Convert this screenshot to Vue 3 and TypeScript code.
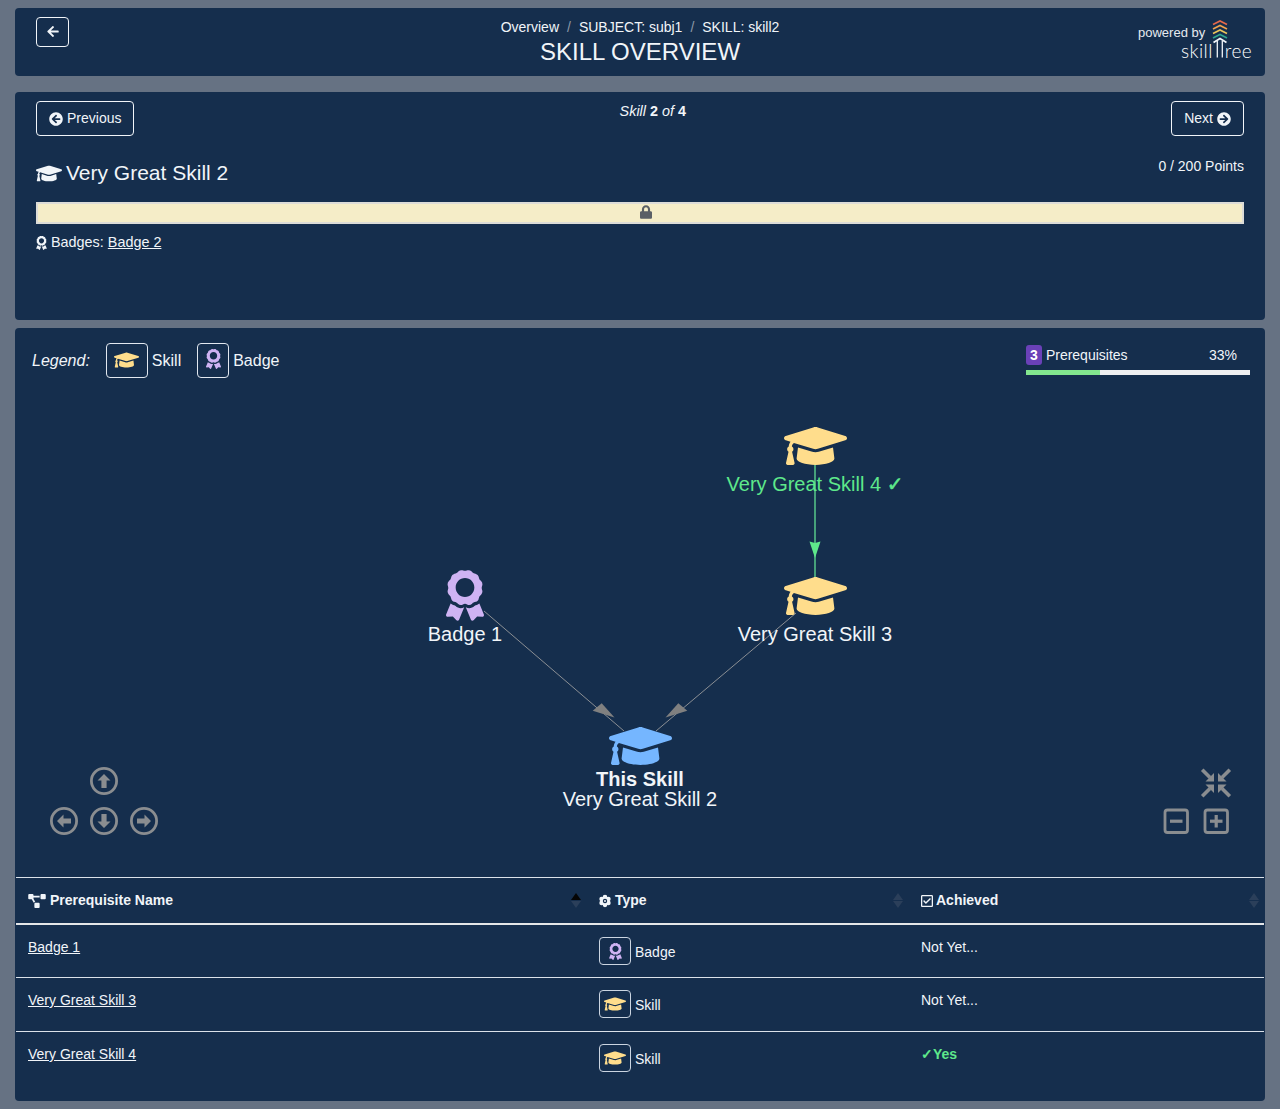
<script setup lang="ts">
const cap = 'M622.34 153.2L343.4 67.5c-15.2-4.67-31.6-4.67-46.79 0L17.66 153.2c-23.54 7.23-23.54 38.36 0 45.59l48.63 14.94c-10.67 13.19-17.23 29.28-17.88 46.9C38.78 266.15 32 276.11 32 288c0 10.78 5.68 19.85 13.86 25.65L20.33 428.53C18.11 438.52 25.71 448 35.94 448h56.11c10.24 0 17.84-9.48 15.62-19.47L82.14 313.65C90.32 307.85 96 298.78 96 288c0-11.57-6.47-21.25-15.66-26.87.76-15.02 8.44-28.3 20.69-36.72L296.6 284.5c9.06 2.78 26.44 6.25 46.79 0l278.95-85.7c23.55-7.24 23.55-38.36 0-45.6zM352.79 315.09c-28.53 8.76-52.84 3.92-65.59 0l-145.02-44.55L128 384c0 35.35 85.96 64 192 64s192-28.65 192-64l-14.18-113.47-145.03 44.56z'
const award = 'M97.12 362.63c-8.69-8.69-4.16-6.24-25.12-11.85-9.51-2.55-17.87-7.45-25.43-13.32L1.2 448.7c-4.39 10.77 3.81 22.47 15.43 22.03l52.69-2.01L105.56 507c8 8.44 22.04 5.81 26.43-4.96l52.05-127.62c-10.84 6.04-22.87 9.58-35.31 9.58-19.5 0-37.82-7.59-51.61-21.37zM382.8 448.7l-45.37-111.24c-7.56 5.88-15.92 10.77-25.43 13.32-21.07 5.64-16.45 3.18-25.12 11.85-13.79 13.78-32.12 21.37-51.62 21.37-12.44 0-24.47-3.55-35.31-9.58L252 502.04c4.39 10.77 18.44 13.4 26.43 4.96l36.25-38.28 52.69 2.01c11.62.44 19.82-11.27 15.43-22.03zM263 340c15.28-15.55 17.03-14.21 38.79-20.14 13.89-3.79 24.75-14.84 28.47-28.98 7.48-28.4 5.54-24.97 25.95-45.75 10.17-10.35 14.14-25.44 10.42-39.58-7.47-28.38-7.48-24.42 0-52.83 3.72-14.14-.25-29.23-10.42-39.58-20.41-20.78-18.47-17.36-25.95-45.75-3.72-14.14-14.58-25.19-28.47-28.98-27.88-7.61-24.52-5.62-44.95-26.41-10.17-10.35-25-14.4-38.89-10.61-27.87 7.6-23.98 7.61-51.9 0-13.89-3.79-28.72.25-38.89 10.61-20.41 20.78-17.05 18.8-44.94 26.41-13.89 3.79-24.75 14.84-28.47 28.98-7.47 28.39-5.54 24.97-25.95 45.75-10.17 10.35-14.15 25.44-10.42 39.58 7.47 28.36 7.48 24.4 0 52.82-3.72 14.14.25 29.23 10.42 39.59 20.41 20.78 18.47 17.35 25.95 45.75 3.72 14.14 14.58 25.19 28.47 28.98C104.6 325.96 106.27 325 121 340c13.23 13.47 33.84 15.88 49.74 5.82a39.676 39.676 0 0 1 42.53 0c15.89 10.06 36.5 7.65 49.73-5.82zM97.66 175.96c0-53.03 42.24-96.02 94.34-96.02s94.34 42.99 94.34 96.02-42.24 96.02-94.34 96.02-94.34-42.99-94.34-96.02z'
const arrowLeft = 'M257.5 445.1l-22.2 22.2c-9.4 9.4-24.6 9.4-33.9 0L7 273c-9.4-9.4-9.4-24.6 0-33.9L201.4 44.7c9.4-9.4 24.6-9.4 33.9 0l22.2 22.2c9.5 9.5 9.3 25-.4 34.3L136.6 216H424c13.3 0 24 10.7 24 24v32c0 13.3-10.7 24-24 24H136.6l120.5 114.8c9.8 9.3 10 24.8.4 34.3z'
const circleLeft = 'M256 504C119 504 8 393 8 256S119 8 256 8s248 111 248 248-111 248-248 248zm28.9-143.6L209.4 288H392c13.3 0 24-10.7 24-24v-16c0-13.3-10.7-24-24-24H209.4l75.5-72.4c9.7-9.3 9.9-24.8.4-34.3l-11-10.9c-9.4-9.4-24.6-9.4-33.9 0L107.7 239c-9.4 9.4-9.4 24.6 0 33.9l132.7 132.7c9.4 9.4 24.6 9.4 33.9 0l11-10.9c9.5-9.5 9.3-25-.4-34.3z'
const circleRight = 'M256 8c137 0 248 111 248 248S393 504 256 504 8 393 8 256 119 8 256 8zm-28.9 143.6l75.5 72.4H120c-13.3 0-24 10.7-24 24v16c0 13.3 10.7 24 24 24h182.6l-75.5 72.4c-9.7 9.3-9.9 24.8-.4 34.3l11 10.9c9.4 9.4 24.6 9.4 33.9 0L404.3 273c9.4-9.4 9.4-24.6 0-33.9L271.6 106.3c-9.4-9.4-24.6-9.4-33.9 0l-11 10.9c-9.5 9.6-9.3 25.1.4 34.4z'
const lock = 'M400 224h-24v-72C376 68.2 307.8 0 224 0S72 68.2 72 152v72H48c-26.5 0-48 21.5-48 48v192c0 26.5 21.5 48 48 48h352c26.5 0 48-21.5 48-48V272c0-26.5-21.5-48-48-48zm-104 0H152v-72c0-39.7 32.3-72 72-72s72 32.3 72 72v72z'
const diagram = 'M384 320H256c-17.67 0-32 14.33-32 32v128c0 17.67 14.33 32 32 32h128c17.67 0 32-14.33 32-32V352c0-17.67-14.33-32-32-32zM192 32c0-17.67-14.33-32-32-32H32C14.33 0 0 14.33 0 32v128c0 17.67 14.33 32 32 32h95.72l73.16 128.04C211.98 300.98 232.4 288 256 288h.28L192 175.51V128h224V64H192V32zM608 0H480c-17.67 0-32 14.33-32 32v128c0 17.67 14.33 32 32 32h128c17.67 0 32-14.33 32-32V32c0-17.67-14.33-32-32-32z'
const checkSquare = 'M400 32H48C21.5 32 0 53.5 0 80v352c0 26.5 21.5 48 48 48h352c26.5 0 48-21.5 48-48V80c0-26.5-21.5-48-48-48zm0 400H48V80h352v352zm-35.864-241.724L191.547 361.48c-4.705 4.667-12.303 4.637-16.97-.068l-90.781-91.516c-4.667-4.705-4.637-12.303.069-16.971l22.719-22.536c4.705-4.667 12.303-4.637 16.97.069l59.792 60.277 141.352-140.216c4.705-4.667 12.303-4.637 16.97.068l22.536 22.718c4.667 4.706 4.637 12.304-.068 16.971z'

interface Row { name: string; kind: 'Badge' | 'Skill'; done: boolean }
const rows: Row[] = [
  { name: 'Badge 1', kind: 'Badge', done: false },
  { name: 'Very Great Skill 3', kind: 'Skill', done: false },
  { name: 'Very Great Skill 4', kind: 'Skill', done: true },
]
const chevrons = [
  { y: 3, c: '#e4694a' },
  { y: 7.5, c: '#f0a24e' },
  { y: 12, c: '#e8c35a' },
  { y: 16.5, c: '#2fa58f' },
]
const nav = [
  { x: 104, y: 781, r: 90 },
  { x: 64, y: 821, r: 0 },
  { x: 104, y: 821, r: 270 },
  { x: 144, y: 821, r: 180 },
]
const fit = [
  { sx: 1, sy: 1 },
  { sx: -1, sy: 1 },
  { sx: 1, sy: -1 },
  { sx: -1, sy: -1 },
]
const lobes = [0, 60, 120, 180, 240, 300].map((a) => ({
  x: 8 + 4.4 * Math.cos((a - 90) * Math.PI / 180),
  y: 8 + 4.4 * Math.sin((a - 90) * Math.PI / 180),
}))
</script>

<template>
  <div class="page">
    <header class="card head">
      <button class="btn back">
        <svg class="i13" viewBox="0 0 448 512"><path :d="arrowLeft" /></svg>
      </button>
      <div class="head-mid">
        <nav class="crumbs">
          <span>Overview</span><i>/</i><span>SUBJECT: subj1</span><i>/</i><span>SKILL: skill2</span>
        </nav>
        <h1>SKILL OVERVIEW</h1>
      </div>
      <div class="brand">
        <span class="pow">powered by</span>
        <svg class="chev" width="18" height="42" viewBox="0 0 18 42">
          <polyline v-for="ch in chevrons" :key="ch.y" :points="`2,${ch.y + 3.6} 9,${ch.y} 16,${ch.y + 3.6}`" :stroke="ch.c" />
          <polyline points="2.5,24.5 9,20.5 15.5,24.5" stroke="#f1f5f9" />
          <line x1="6.3" y1="23" x2="6.3" y2="39.5" stroke="#f1f5f9" />
          <line x1="11.3" y1="23" x2="11.3" y2="39.5" stroke="#f1f5f9" />
        </svg>
        <div class="logo"><span>skill</span><span class="ree">ree</span></div>
      </div>
    </header>

    <section class="card skill">
      <div class="skill-nav">
        <button class="btn step">
          <svg class="i14" viewBox="0 0 512 512"><path :d="circleLeft" /></svg>
          Previous
        </button>
        <div class="count"><em>Skill</em> <b>2</b> <em>of</em> <b>4</b></div>
        <button class="btn step">
          Next
          <svg class="i14" viewBox="0 0 512 512"><path :d="circleRight" /></svg>
        </button>
      </div>
      <div class="title-row">
        <h2>
          <svg class="titlecap" viewBox="0 0 640 512"><path :d="cap" /></svg>
          Very Great Skill 2
        </h2>
        <div class="points">0 / 200 Points</div>
      </div>
      <div class="bar">
        <svg class="lock" viewBox="0 0 448 512"><path :d="lock" /></svg>
      </div>
      <div class="badges">
        <svg class="i14award" viewBox="0 0 384 512"><path :d="award" /></svg>
        Badges: <a>Badge 2</a>
      </div>
    </section>

    <section class="card deps">
      <div class="graph">
        <div class="graph-top">
          <div class="legend">
            <em>Legend:</em>
            <span class="box wide"><svg class="capmini" viewBox="0 0 640 512"><path :d="cap" /></svg></span>
            <span>Skill</span>
            <span class="box narrow"><svg class="awardmini" viewBox="0 0 384 512"><path :d="award" /></svg></span>
            <span>Badge</span>
          </div>
          <div class="prog">
            <div class="prog-text">
              <span><b class="num">3</b> Prerequisites</span><span class="pct">33%</span>
            </div>
            <div class="prog-track"><div class="prog-fill" style="width: 33%"></div></div>
          </div>
        </div>

        <svg class="canvas" width="1250" height="549" viewBox="15 328 1250 549">
          <line x1="484" y1="611" x2="624" y2="731" class="edge" />
          <line x1="796" y1="613" x2="656" y2="731" class="edge" />
          <polygon points="614.5,717.5 592.7,710.7 601.7,703.3" class="tip" />
          <polygon points="665.5,717.5 687.3,710.7 678.3,703.3" class="tip" />
          <line x1="815" y1="462" x2="815" y2="580" class="edge-ok" />
          <polygon points="815,558 809.5,541.5 815,543 820.5,541.5" fill="#5ee88b" />
          <svg x="784" y="420.8" width="63" height="50.4" viewBox="0 0 640 512"><path :d="cap" fill="#ffdd8c" /></svg>
          <svg x="784" y="570.8" width="63" height="50.4" viewBox="0 0 640 512"><path :d="cap" fill="#ffdd8c" /></svg>
          <svg x="609" y="720.8" width="63" height="50.4" viewBox="0 0 640 512"><path :d="cap" fill="#75b6ff" /></svg>
          <svg x="446" y="570" width="38" height="51" viewBox="0 0 384 512"><path :d="award" fill="#cfb3f3" /></svg>
          <text x="815" y="491" class="lbl ok">Very Great Skill 4 <tspan class="tick">✓</tspan></text>
          <text x="815" y="641" class="lbl">Very Great Skill 3</text>
          <text x="465" y="641" class="lbl">Badge 1</text>
          <text x="640" y="786" class="lbl bold">This Skill</text>
          <text x="640" y="806" class="lbl">Very Great Skill 2</text>

          <g v-for="n in nav" :key="`${n.x}-${n.y}`" :transform="`translate(${n.x} ${n.y}) rotate(${n.r})`">
            <circle r="12.6" class="nav-ring" />
            <path d="M-7 0 L-0.5 -6.5 L-0.5 -2.6 L7 -2.6 L7 2.6 L-0.5 2.6 L-0.5 6.5 Z" class="nav-arrow" />
          </g>
          <g v-for="f in fit" :key="`${f.sx}${f.sy}`" :transform="`translate(1216 783) scale(${f.sx} ${f.sy})`">
            <polygon points="-2,-1.5 -2,-10 -10.5,-1.5" class="nav-arrow" />
            <line x1="-13.8" y1="-13.3" x2="-6" y2="-5.5" class="fit-stem" />
          </g>
          <rect x="1165" y="810" width="22.5" height="22.5" rx="2.5" class="nav-ring" />
          <rect x="1205" y="810" width="22.5" height="22.5" rx="2.5" class="nav-ring" />
          <rect x="1170" y="819.6" width="12.5" height="3.2" class="nav-arrow" />
          <rect x="1210" y="819.6" width="12.5" height="3.2" class="nav-arrow" />
          <rect x="1214.6" y="815" width="3.2" height="12.5" class="nav-arrow" />
        </svg>
      </div>

      <div class="table">
        <div class="row headrow">
          <div class="cell th">
            <svg class="thdiagram" viewBox="0 0 640 512"><path :d="diagram" /></svg>
            Prerequisite Name
            <span class="sort"><i class="up on"></i><i class="down"></i></span>
          </div>
          <div class="cell th">
            <svg class="thcog" viewBox="0 0 16 16">
              <circle v-for="(l, idx) in lobes" :key="idx" :cx="l.x" :cy="l.y" r="2.7" />
              <circle cx="8" cy="8" r="4.6" />
              <circle cx="8" cy="8" r="2.5" class="cog-hole" />
              <circle cx="8" cy="8" r="1.1" />
            </svg>
            Type
            <span class="sort"><i class="up"></i><i class="down"></i></span>
          </div>
          <div class="cell th">
            <svg class="thcheck" viewBox="0 0 448 512"><path :d="checkSquare" /></svg>
            Achieved
            <span class="sort"><i class="up"></i><i class="down"></i></span>
          </div>
        </div>
        <div v-for="r in rows" :key="r.name" class="row body">
          <div class="cell"><a>{{ r.name }}</a></div>
          <div class="cell type">
            <span class="tbox">
              <svg v-if="r.kind === 'Skill'" class="tcap" viewBox="0 0 640 512"><path :d="cap" /></svg>
              <svg v-else class="taward" viewBox="0 0 384 512"><path :d="award" /></svg>
            </span>
            <span class="tname">{{ r.kind }}</span>
          </div>
          <div class="cell">
            <span v-if="r.done" class="yes">✓Yes</span>
            <span v-else>Not Yet...</span>
          </div>
        </div>
      </div>
    </section>
  </div>
</template>

<style>
body { margin: 0; background: #667283; }
</style>

<style scoped>
.page {
  box-sizing: border-box;
  width: 1280px;
  height: 1109px;
  padding: 8px 15px;
  background: #667283;
  color: #f1f5f9;
  font-family: "Liberation Sans", Arial, sans-serif;
  font-size: 14px;
  line-height: 21px;
}
.card { background: #152e4d; border-radius: 4px; box-sizing: border-box; }
svg { fill: currentColor; }
.btn {
  box-sizing: border-box;
  background: transparent;
  border: 1px solid #f1f5f9;
  border-radius: 4px;
  color: #f1f5f9;
  font: inherit;
  padding: 0;
  display: flex;
  align-items: center;
  justify-content: center;
}

/* header */
.head {
  height: 68px;
  margin-bottom: 16px;
  padding: 9px 21px 0;
  display: grid;
  grid-template-columns: 1fr auto 1fr;
}
.back { width: 33px; height: 30px; padding-bottom: 2px; }
.i13 { width: 12px; height: 13px; }
.head-mid { text-align: center; }
.crumbs { display: flex; justify-content: center; height: 21px; }
.crumbs i { font-style: normal; color: #8c98a8; margin: 0 8px; }
h1 { margin: -1px 0 0; font-size: 24px; line-height: 29px; font-weight: 400; }
.brand { justify-self: end; position: relative; width: 114px; margin-right: -8px; font-size: 13px; }
.pow { display: block; color: #e6eaf0; line-height: 14px; margin-top: 9px; }
.chev { position: absolute; left: 73px; top: 1px; }
.chev polyline, .chev line { fill: none; stroke-width: 1.7; }
.chev line { stroke-width: 1.3; }
.logo {
  display: flex;
  align-items: flex-end;
  justify-content: flex-end;
  gap: 12px;
  color: #fff;
  font-family: Lato, "Open Sans", sans-serif;
  font-weight: 300;
  font-size: 19px;
  line-height: 20px;
  letter-spacing: 0.4px;
  height: 20px;
  margin-top: 1px;
}

/* skill card */
.skill { height: 228px; margin-bottom: 8px; padding: 9px 21px 0; }
.skill-nav { display: flex; justify-content: space-between; align-items: flex-start; }
.step { height: 35px; gap: 4px; padding: 0 12px; }
.i14 { width: 14px; height: 14px; }
.count { line-height: 21px; font-size: 14.4px; }
.title-row { display: flex; justify-content: space-between; margin-top: 11px; height: 55px; }
h2 { margin: 0; padding-top: 11px; font-size: 21px; line-height: 30px; font-weight: 400; display: flex; align-items: center; gap: 4px; height: 30px; }
.titlecap { width: 26px; height: 21px; }
.points { padding-top: 9px; }
.bar {
  box-sizing: border-box;
  height: 22px;
  border: 2px solid #dcdcd8;
  background: #f5edc8;
  display: flex;
  align-items: center;
  justify-content: center;
  color: #5a5f66;
  padding: 0 0 2px 12px;
}
.lock { width: 12px; height: 14px; }
.badges { display: flex; align-items: center; gap: 4px; margin-top: 8px; font-size: 14.4px; }
.i14award { width: 11px; height: 14px; }
a { text-decoration: underline; color: #f1f5f9; }

/* graph */
.deps { height: 773px; padding: 0 1px; }
.graph { height: 549px; position: relative; }
.graph-top {
  position: relative;
  z-index: 1;
  display: flex;
  justify-content: space-between;
  padding: 15px 14px 0 16px;
}
.legend { display: flex; align-items: center; font-size: 16px; height: 35px; }
.legend em { margin-right: 16px; }
.box {
  box-sizing: border-box;
  border: 1px solid #e2e8f0;
  border-radius: 4px;
  height: 35px;
  display: flex;
  align-items: center;
  justify-content: center;
  margin-right: 4px;
}
.wide { width: 42px; }
.narrow { width: 32px; margin-left: 16px; }
.capmini { width: 25px; height: 20px; fill: #ffdd8c; margin-bottom: 2px; }
.awardmini { width: 15px; height: 20px; fill: #cfb3f3; margin-bottom: 3px; }
.prog { width: 224px; padding-top: 2px; }
.prog-text { display: flex; justify-content: space-between; height: 20px; line-height: 20px; padding-right: 13px; }
.num {
  display: inline-block;
  width: 16px;
  height: 20px;
  border-radius: 3px;
  background: #6a41b8;
  color: #fff;
  text-align: center;
}
.prog-track { height: 5px; margin-top: 5px; background: #eeeff1; }
.prog-fill { height: 100%; background: #83e78f; }
.canvas { position: absolute; left: -1px; top: 0; }
.edge { stroke: #8b8f94; stroke-width: 1; }
.tip { fill: #808080; }
.edge-ok { stroke: #4fb583; stroke-width: 1.7; }
.lbl { font-size: 20px; text-anchor: middle; fill: #f1f5f9; }
.lbl.ok { fill: #5ee88b; }
.lbl.bold { font-weight: 700; }
.tick { font-family: "DejaVu Sans", sans-serif; font-weight: 700; stroke: #5ee88b; stroke-width: 0.5; }
.nav-ring { fill: none; stroke: #8a8d90; stroke-width: 2.8; }
.nav-arrow { fill: #8a8d90; }
.fit-stem { stroke: #8a8d90; stroke-width: 3.6; }

/* table */
.table { border-top: 1px solid #dbe2ea; }
.row { display: grid; grid-template-columns: 570px 323px 355px; }
.headrow { height: 45px; border-bottom: 2px solid #e4e6e8; }
.body { height: 53px; border-bottom: 1px solid #dbe2ea; box-sizing: content-box; }
.body:nth-child(2) { height: 52px; }
.body:last-child { border-bottom: 0; }
.cell { padding: 12px 12px 0; position: relative; box-sizing: border-box; }
.th { font-weight: 700; display: flex; align-items: center; gap: 3px; padding-top: 0; }
.th:first-child { gap: 4px; }
.thdiagram { width: 18px; height: 14px; }
.thcog { width: 14px; height: 14px; }
.cog-hole { fill: #152e4d; }
.thcheck { width: 12px; height: 14px; }
.sort { position: absolute; right: 5px; top: 15px; width: 10px; height: 15px; }
.th:nth-child(2) .sort { right: 6px; }
.sort i { position: absolute; left: 0; width: 0; height: 0; border-left: 5px solid transparent; border-right: 5px solid transparent; }
.sort .up { top: 0; border-bottom: 7px solid #2b3f5a; }
.sort .down { bottom: 0; border-top: 7px solid #2b3f5a; }
.sort .up.on { border-bottom-color: #050505; }
.type { display: flex; align-items: flex-end; align-self: start; }
.tbox {
  box-sizing: border-box;
  margin-left: 1px;
  width: 32px;
  height: 28px;
  border: 1px solid #cbd5e1;
  border-radius: 4px;
  display: flex;
  align-items: center;
  justify-content: center;
  margin-right: 4px;
}
.tcap { width: 22px; height: 18px; fill: #ffdd8c; }
.taward { width: 13px; height: 17px; fill: #cfb3f3; }
.tname { line-height: 21px; height: 21px; margin-bottom: 2px; }
.yes { color: #5ee88b; font-weight: 700; }
</style>
